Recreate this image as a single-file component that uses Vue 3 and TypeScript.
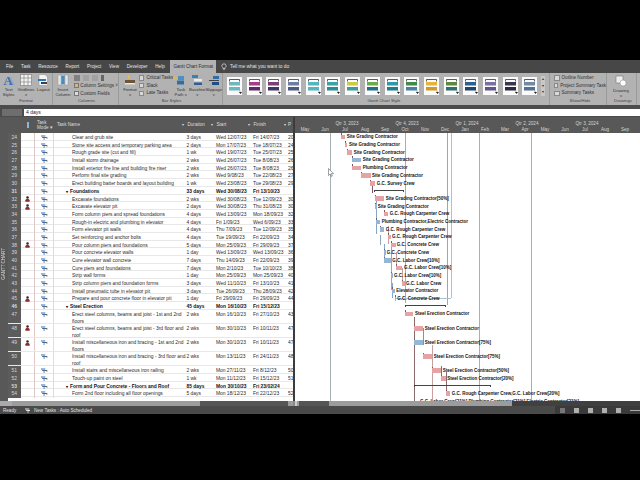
<script setup lang="ts">
interface Row { id: number; res?: boolean; name: string; dur: string; start: string; finish: string; pred?: string; bold?: boolean; tall?: boolean }
interface Bar { id: number; x: number; w: number; c?: string; label?: string; lx?: number; summary?: boolean }

const tabs = ['File', 'Task', 'Resource', 'Report', 'Project', 'View', 'Developer', 'Help']
const styles = [
  ['#6fb7bf', '#6fb7bf'], ['#a83c8c', '#5b2b66'], ['#7a3f78', '#3e3560'], ['#6d7fa8', '#4e5a80'],
  ['#57b3be', '#57b3be'], ['#3aa3a6', '#2b8c92'], ['#c9cc4a', '#3f9a9a'], ['#6aab4c', '#1f6f8c'],
  ['#2c9aa8', '#1f7f8c'], ['#3f8a4a', '#4a7fa8'], ['#e5b53a', '#d09a2c'], ['#5a8a3a', '#2f6f6f'],
  ['#2a5f94', '#1d4570'], ['#7a6fa0', '#5f5785'], ['#3a3550', '#2a2a3a'], ['#6f8ba5', '#557390'],
]

const rows: Row[] = [
  { id: 24, name: 'Clear and grub site', dur: '3 days', start: 'Wed 12/07/23', finish: 'Fri 14/07/23', pred: '20' },
  { id: 25, name: 'Stone site access and temporary parking area', dur: '2 days', start: 'Mon 17/07/23', finish: 'Tue 18/07/23', pred: '24' },
  { id: 26, name: 'Rough grade site (cut and fill)', dur: '1 wk', start: 'Wed 19/07/23', finish: 'Tue 25/07/23', pred: '25' },
  { id: 27, name: 'Install storm drainage', dur: '2 wks', start: 'Wed 26/07/23', finish: 'Tue 8/08/23', pred: '26' },
  { id: 28, name: 'Install exterior fire line and building fire riser', dur: '2 wks', start: 'Wed 26/07/23', finish: 'Tue 8/08/23', pred: '26' },
  { id: 29, name: 'Perform final site grading', dur: '2 wks', start: 'Wed 9/08/23', finish: 'Tue 22/08/23', pred: '27' },
  { id: 30, name: 'Erect building batter boards and layout building', dur: '1 wk', start: 'Wed 23/08/23', finish: 'Tue 29/08/23', pred: '29' },
  { id: 31, name: 'Foundations', dur: '33 days', start: 'Wed 30/08/23', finish: 'Fri 13/10/23', bold: true },
  { id: 32, res: true, name: 'Excavate foundations', dur: '2 wks', start: 'Wed 30/08/23', finish: 'Tue 12/09/23', pred: '30' },
  { id: 33, res: true, name: 'Excavate elevator pit', dur: '2 days', start: 'Wed 30/08/23', finish: 'Thu 31/08/23', pred: '30' },
  { id: 34, name: 'Form column piers and spread foundations', dur: '4 days', start: 'Wed 13/09/23', finish: 'Mon 18/09/23', pred: '32' },
  { id: 35, name: 'Rough-in electric and plumbing in elevator', dur: '4 days', start: 'Fri 1/09/23', finish: 'Wed 6/09/23', pred: '33' },
  { id: 36, name: 'Form elevator pit walls', dur: '4 days', start: 'Thu 7/09/23', finish: 'Tue 12/09/23', pred: '35' },
  { id: 37, name: 'Set reinforcing and anchor bolts', dur: '4 days', start: 'Tue 19/09/23', finish: 'Fri 22/09/23', pred: '34' },
  { id: 38, res: true, name: 'Pour column piers and foundations', dur: '5 days', start: 'Mon 25/09/23', finish: 'Fri 29/09/23', pred: '37' },
  { id: 39, name: 'Pour concrete elevator walls', dur: '1 day', start: 'Wed 13/09/23', finish: 'Wed 13/09/23', pred: '36' },
  { id: 40, name: 'Cure elevator wall concrete', dur: '7 days', start: 'Thu 14/09/23', finish: 'Fri 22/09/23', pred: '39' },
  { id: 41, name: 'Cure piers and foundations', dur: '7 days', start: 'Mon 2/10/23', finish: 'Tue 10/10/23', pred: '38' },
  { id: 42, name: 'Strip wall forms', dur: '1 day', start: 'Mon 25/09/23', finish: 'Mon 25/09/23', pred: '40' },
  { id: 43, name: 'Strip column piers and foundation forms', dur: '3 days', start: 'Wed 11/10/23', finish: 'Fri 13/10/23', pred: '41' },
  { id: 44, name: 'Install pneumatic tube in elevator pit', dur: '3 days', start: 'Tue 26/09/23', finish: 'Thu 28/09/23', pred: '42' },
  { id: 45, res: true, name: 'Prepare and pour concrete floor in elevator pit', dur: '1 day', start: 'Fri 29/09/23', finish: 'Fri 29/09/23', pred: '44' },
  { id: 46, name: 'Steel Erection', dur: '45 days', start: 'Mon 16/10/23', finish: 'Fri 15/12/23', bold: true },
  { id: 47, tall: true, name: 'Erect steel columns, beams and joist - 1st and 2nd floors', dur: '2 wks', start: 'Mon 16/10/23', finish: 'Fri 27/10/23', pred: '43' },
  { id: 48, tall: true, res: true, name: 'Erect steel columns, beams and joist - 3rd floor and roof', dur: '2 wks', start: 'Mon 30/10/23', finish: 'Fri 10/11/23', pred: '47' },
  { id: 49, tall: true, res: true, name: 'Install miscellaneous iron and bracing - 1st and 2nd floors', dur: '2 wks', start: 'Mon 30/10/23', finish: 'Fri 10/11/23', pred: '47' },
  { id: 50, tall: true, name: 'Install miscellaneous iron and bracing - 3rd floor and roof', dur: '2 wks', start: 'Mon 13/11/23', finish: 'Fri 24/11/23', pred: '48' },
  { id: 51, name: 'Install stairs and miscellaneous iron railing', dur: '2 wks', start: 'Mon 27/11/23', finish: 'Fri 8/12/23', pred: '50' },
  { id: 52, name: 'Touch-up paint on steel', dur: '1 wk', start: 'Mon 11/12/23', finish: 'Fri 15/12/23', pred: '51' },
  { id: 53, name: 'Form and Pour Concrete - Floors and Roof', dur: '85 days', start: 'Mon 30/10/23', finish: 'Fri 23/02/24', bold: true },
  { id: 54, name: 'Form 2nd floor including all floor openings', dur: '5 days', start: 'Mon 18/12/23', finish: 'Fri 22/12/23', pred: '52' },
]

const R = '#e6a3a5'
const B = '#95b6d8'
const bars: Bar[] = [
  { id: 24, x: 341, w: 4, c: R, label: 'Site Grading Contractor', lx: 346.7 },
  { id: 25, x: 345, w: 2, c: R, label: 'Site Grading Contractor', lx: 349 },
  { id: 26, x: 347, w: 5, c: R, label: 'Site Grading Contractor', lx: 353.7 },
  { id: 27, x: 352, w: 9, c: B, label: 'Site Grading Contractor', lx: 362.7 },
  { id: 28, x: 352, w: 9, c: R, label: 'Plumbing Contractor', lx: 362.7 },
  { id: 29, x: 361, w: 10, c: R, label: 'Site Grading Contractor', lx: 372 },
  { id: 30, x: 370, w: 5, c: R, label: 'G.C. Survey Crew', lx: 376.7 },
  { id: 31, x: 374, w: 30, summary: true },
  { id: 32, x: 375, w: 9, c: R, label: 'Site Grading Contractor[50%]', lx: 385.7 },
  { id: 33, x: 375, w: 2, c: B, label: 'Site Grading Contractor', lx: 377.7 },
  { id: 34, x: 384, w: 4, c: R, label: 'G.C. Rough Carpenter Crew', lx: 389.7 },
  { id: 35, x: 376, w: 4, c: B, label: 'Plumbing Contractor,Electric Contractor', lx: 381.7 },
  { id: 36, x: 380, w: 4, c: B, label: 'G.C. Rough Carpenter Crew', lx: 385.7 },
  { id: 37, x: 388, w: 3, c: R, label: 'G.C. Rough Carpenter Crew', lx: 392 },
  { id: 38, x: 391, w: 5, c: R, label: 'G.C. Concrete Crew', lx: 396.7 },
  { id: 39, x: 384, w: 2, c: B, label: 'G.C. Concrete Crew', lx: 386.7 },
  { id: 40, x: 384, w: 7, c: B, label: 'G.C. Labor Crew[10%]', lx: 392.3 },
  { id: 41, x: 396, w: 6, c: R, label: 'G.C. Labor Crew[10%]', lx: 404 },
  { id: 42, x: 391, w: 2, c: B, label: 'G.C. Labor Crew[10%]', lx: 394 },
  { id: 43, x: 402, w: 3, c: R, label: 'G.C. Labor Crew', lx: 406 },
  { id: 44, x: 392, w: 3, c: B, label: 'Elevator Contractor', lx: 396.3 },
  { id: 45, x: 395, w: 1, c: B, label: 'G.C. Concrete Crew', lx: 397.3 },
  { id: 46, x: 405, w: 41, summary: true },
  { id: 47, x: 405, w: 8, c: R, label: 'Steel Erection Contractor', lx: 415 },
  { id: 48, x: 414, w: 9, c: R, label: 'Steel Erection Contractor', lx: 424.7 },
  { id: 49, x: 414, w: 9, c: B, label: 'Steel Erection Contractor[75%]', lx: 424.7 },
  { id: 50, x: 423, w: 9, c: R, label: 'Steel Erection Contractor[75%]', lx: 433.7 },
  { id: 51, x: 432, w: 9, c: R, label: 'Steel Erection Contractor[50%]', lx: 442.7 },
  { id: 52, x: 441, w: 5, c: R, label: 'Steel Erection Contractor[20%]', lx: 447.3 },
  { id: 53, x: 414, w: 77, summary: true },
  { id: 54, x: 446, w: 4, c: R, label: 'G.C. Rough Carpenter Crew,G.C. Labor Crew[20%]', lx: 451.7 },
]

const months = ['May', 'Jun', 'Jul', 'Aug', 'Sep', 'Oct', 'Nov', 'Dec', 'Jan', 'Feb', 'Mar', 'Apr', 'May', 'Jun', 'Jul', 'Aug', 'Sep']
const quarters = ['Qtr 3, 2023', 'Qtr 4, 2023', 'Qtr 1, 2024', 'Qtr 2, 2024', 'Qtr 3, 2024']

const GX = 295
const GY = 133
const guides = [
  { x: 329.5, h: 268, c: '#a5b0b6' },
  { x: 405, h: 170, c: '#a5b0b6' },
  { x: 446.700, h: 172, c: '#9aa8b4' },
  { x: 451, h: 165, c: '#a9c4cf' },
  { x: 479, h: 268, c: '#a5b0b6' },
  { x: 531, h: 268, c: '#a5b0b6' },
]
const connectors = [
  { x: 372, y1: 186, y2: 193, c: '#7a5a60' },
  { x: 376, y1: 198, y2: 234, c: '#86a6c4' },
  { x: 380, y1: 235, y2: 245, c: '#86a6c4' },
  { x: 384, y1: 244, y2: 262, c: '#86a6c4' },
  { x: 388, y1: 226, y2: 244, c: '#c99a9a' },
  { x: 391, y1: 244, y2: 290, c: '#98a8b6' },
  { x: 396, y1: 252, y2: 270, c: '#c99a9a' },
  { x: 402, y1: 268, y2: 284, c: '#c99a9a' },
  { x: 392, y1: 283, y2: 298, c: '#86a6c4' },
  { x: 414, y1: 317, y2: 401, c: '#8a6a6a' },
  { x: 423, y1: 328, y2: 345, c: '#9a8a8a' },
  { x: 432, y1: 345, y2: 401, c: '#c9a0a0' },
  { x: 441, y1: 366, y2: 375, c: '#8a6a6a' },
  { x: 446, y1: 372, y2: 392, c: '#8a6a6a' },
]

const rowH = 7.7
const tallH = 14.1
const tops = new Map<number, number>()
let acc = 0
for (const r of rows) {
  tops.set(r.id, acc)
  acc += r.tall ? tallH : rowH
}
const placed = bars.map((b) => ({ ...b, top: (tops.get(b.id) ?? 0) + 1.8 }))
</script>

<template>
  <div class="screen">
    <div class="black-top"></div>

    <nav class="tabs">
      <span v-for="t in tabs" :key="t" class="tab">{{ t }}</span>
      <span class="tab active">Gantt Chart Format</span>
      <svg class="bulb" viewBox="0 0 8 10" width="6" height="8"><path d="M4 .8a2.7 2.7 0 0 0-1.5 5V7h3V5.800A2.700 2.700 0 0 0 4 .8zM3 8.500h2" fill="none" stroke="#e8e8e8" stroke-width=".9" /></svg>
      <span class="tell">Tell me what you want to do</span>
    </nav>

    <section class="ribbon">
      <div class="group g-format">
        <div class="cmds">
          <div class="cmd w17">
            <svg viewBox="0 0 12 12" width="12" height="12"><text x="0.500" y="10.500" class="aa">A</text></svg>
            <span>Text<br />Styles</span>
          </div>
          <div class="cmd w17">
            <svg viewBox="0 0 12 12" width="12" height="12"><rect x=".5" y=".5" width="11" height="11" fill="#f2f2f2" stroke="#777" stroke-width=".6" /><path d="M4 .5v11M8 .5v11M.5 4h11M.5 8h11" stroke="#777" stroke-width=".6" /></svg>
            <span>Gridlines<br />&#709;</span>
          </div>
          <div class="cmd w17">
            <svg viewBox="0 0 12 12" width="12" height="12"><path d="M2 .5h6l2.500 2.500v8.500H2z" fill="#f5f5f5" stroke="#888" stroke-width=".5" /><rect x="1" y="5" width="8" height="2" fill="#2f78b8" /><rect x="4" y="8" width="6" height="2" fill="#3f3f3f" /></svg>
            <span>Layout</span>
          </div>
        </div>
        <div class="glabel">Format</div>
      </div>

      <div class="group g-columns">
        <div class="cmds">
          <div class="cmd w17">
            <svg viewBox="0 0 12 12" width="12" height="12"><rect x="1" y="1" width="3" height="10" fill="#e8e8e8" stroke="#888" stroke-width=".4" /><rect x="8" y="1" width="3" height="10" fill="#e8e8e8" stroke="#888" stroke-width=".4" /><rect x="4.500" y="2" width="3" height="8" fill="#3f8fc9" /></svg>
            <span>Insert<br />Column</span>
          </div>
          <div class="col-tools">
            <div class="mini-row">
              <i class="sq dark"></i><i class="sq"></i><i class="sq"></i><i class="sq pin"></i>
            </div>
            <div class="opt"><i class="swatch warm"></i>Column Settings &#709;</div>
            <div class="opt"><i class="swatch"></i>Custom Fields</div>
          </div>
        </div>
        <div class="glabel">Columns</div>
      </div>

      <div class="group g-bars">
        <div class="cmds">
          <div class="cmd w18">
            <svg viewBox="0 0 12 12" width="12" height="12"><path d="M4 1l2 2-2 2z" fill="#f0c040" /><rect x="1" y="6" width="10" height="3" fill="#6b5638" /><rect x="1" y="9" width="10" height="1.500" fill="#e6e6e6" /></svg>
            <span>Format<br />&#709;</span>
          </div>
          <div class="checks">
            <label class="chk"><i></i>Critical Tasks</label>
            <label class="chk"><i></i>Slack</label>
            <label class="chk"><i></i>Late Tasks</label>
          </div>
          <div class="arrow-flag"></div>
          <div class="cmd w165">
            <svg viewBox="0 0 12 12" width="12" height="12"><rect x="3" y="2" width="6" height="4" fill="#4d8fc2" /><rect x="2" y="6.500" width="7" height="4" fill="#2f6ea6" /></svg>
            <span>Task<br />Path &#709;</span>
          </div>
          <div class="cmd w165">
            <svg viewBox="0 0 12 12" width="12" height="12"><rect x="1" y="1" width="6" height="3" fill="#3b7fb8" /><rect x="3" y="5" width="8" height="2.500" fill="#e8e8e8" /><rect x="3" y="8.500" width="8" height="2.500" fill="#2f5f8f" /></svg>
            <span>Baseline<br />&#709;</span>
          </div>
          <div class="cmd w165">
            <svg viewBox="0 0 12 12" width="12" height="12"><rect x="5" y="2" width="6" height="3" fill="#2f6ea6" /><rect x="1" y="6" width="10" height="1" fill="#444" /><rect x="4" y="8" width="7" height="3" fill="#1f4f80" /></svg>
            <span>Slippage<br />&#709;</span>
          </div>
        </div>
        <div class="glabel">Bar Styles</div>
      </div>

      <div class="group g-gallery">
        <div class="gallery">
          <div v-for="(s, i) in styles" :key="i" class="thumb">
            <svg viewBox="0 0 15 18" width="15" height="18">
              <path d="M2.500 4.500V2.500h10v2" fill="none" stroke="#333" stroke-width=".8" />
              <rect x="2" y="5" width="11" height="3.500" :fill="s[0]" />
              <rect x="2" y="10" width="11" height="3.500" :fill="s[1]" />
              <path d="M13 13.500v2" stroke="#777" stroke-width=".6" />
              <path d="M12 15l1.500 2 1.500-2z" fill="#222" />
            </svg>
          </div>
          <div class="spin"><i>&#9652;</i><i>&#9662;</i><i>&#9662;</i></div>
        </div>
        <div class="glabel gal-label">Gantt Chart Style</div>
      </div>

      <div class="group g-show">
        <div class="checks show">
          <label class="chk"><i></i>Outline Number</label>
          <label class="chk"><i></i>Project Summary Task</label>
          <label class="chk"><i></i>Summary Tasks</label>
        </div>
        <div class="glabel">Show/Hide</div>
      </div>

      <div class="group g-draw">
        <div class="cmd w22">
          <svg viewBox="0 0 12 12" width="12" height="12"><rect x="1" y="1" width="7" height="7" fill="#eee" stroke="#777" stroke-width=".6" /><circle cx="8" cy="8" r="3" fill="#fff" stroke="#888" stroke-width=".5" /></svg>
          <span>Drawing<br />&#709;</span>
        </div>
        <div class="glabel">Drawings</div>
      </div>
    </section>

    <div class="entry">
      <div class="entry-box"></div>
      <div class="entry-field">4 days</div>
    </div>

    <div class="main">
      <div class="table-side">
        <div class="thead">
          <span class="c-id"></span>
          <span class="c-ind"><i class="info"></i></span>
          <span class="c-mode">Task<br />Mode &#9662;</span>
          <span class="c-name">Task Name<b>&#9662;</b></span>
          <span class="c-dur">Duration<b>&#9662;</b></span>
          <span class="c-start">Start<b>&#9662;</b></span>
          <span class="c-finish">Finish<b>&#9662;</b></span>
          <span class="c-pred">P</span>
        </div>
        <div class="tbody">
          <div class="rail"><span>GANTT CHART</span></div>
          <div class="rows">
            <div v-for="r in rows" :key="r.id" class="row" :class="{ tall: r.tall, bold: r.bold }">
              <span class="c-id">{{ r.id }}</span>
              <span class="c-ind">
                <svg v-if="r.res" viewBox="0 0 6 7" width="5" height="6"><circle cx="3" cy="1.600" r="1.500" fill="#3a1f1f" /><path d="M.5 6.800V5a2.500 1.800 0 0 1 5 0v1.800z" fill="#8f2a2a" /></svg>
              </span>
              <span class="c-mode">
                <svg viewBox="0 0 9 6" width="7" height="5"><path d="M0 1h5.500M1.500 3h5M3 5h2" stroke="#3b6ea8" stroke-width="1.300" /><path d="M6 3l2-1v3z" fill="#555" /></svg>
              </span>
              <span class="c-name" :class="{ summary: r.bold }">
                <i v-if="r.bold" class="tri">&#9662;</i>{{ r.name }}
              </span>
              <span class="c-dur">{{ r.dur }}</span>
              <span class="c-start">{{ r.start }}</span>
              <span class="c-finish">{{ r.finish }}</span>
              <span class="c-pred">{{ r.pred }}</span>
            </div>
          </div>
        </div>
      </div>

      <div class="splitter"></div>

      <div class="gantt">
        <div class="timescale">
          <div class="qtrs"><span v-for="q in quarters" :key="q">{{ q }}</span></div>
          <div class="months"><span v-for="(m, i) in months" :key="i">{{ m }}</span></div>
        </div>
        <div class="canvas">
          <i v-for="g in guides" :key="g.x" class="guide" :style="{ left: g.x - GX + 'px', height: g.h + 'px', background: g.c }"></i>
          <i v-for="k in connectors" :key="k.x + '-' + k.y1" class="guide" :style="{ left: k.x - GX + 'px', top: k.y1 - GY + 'px', height: k.y2 - k.y1 + 'px', background: k.c }"></i>
          <i class="hline"></i>
          <svg class="cursor" viewBox="0 0 6 9" width="6" height="9"><path d="M.5.500v7l1.700-1.500 1.200 2.500 1-.5L3.300 5.600h2.200z" fill="#fff" stroke="#444" stroke-width=".5" /></svg>
          <template v-for="b in placed" :key="b.id">
            <div v-if="b.summary" class="summary-bar" :style="{ left: b.x - GX + 'px', top: b.top + 'px', width: b.w + 'px' }"></div>
            <template v-else>
              <div class="link" :style="{ left: b.x - GX + 'px', top: b.top - 1.5 + 'px' }"></div>
              <div class="bar" :style="{ left: b.x - GX + 'px', top: b.top + 'px', width: b.w + 'px', background: b.c }"></div>
              <div class="bar-label" :style="{ left: (b.lx ?? 0) - GX + 'px', top: b.top - 1.5 + 'px' }">{{ b.label }}</div>
            </template>
          </template>
          <div class="bar-label cut">G.C. Labor Crew[21%],Plumbing Contractor[21%],Electric Contractor[21%]</div>
        </div>
      </div>
    </div>

    <div class="scrolls">
      <div class="sb-left"><i class="sb-end"></i><div class="sb-track"><i class="sb-thumb"></i></div></div>
      <div class="sb-right"><i class="sb-thumb2"></i><div class="sb-track2"><i class="sb-thumb3"></i></div><div class="sb-rest"></div></div>
    </div>

    <footer class="status">
      <span class="ready">Ready</span>
      <svg viewBox="0 0 9 6" width="7" height="5"><path d="M0 1h5.500M1.500 3h5M3 5h2" stroke="#e8e8e8" stroke-width="1.300" /></svg>
      <span class="newt">New Tasks : Auto Scheduled</span>
      <div class="views">
        <i class="v on"></i><i class="v"></i><i class="v"></i><i class="v"></i><i class="v"></i>
        <span class="zoomline"></span>
      </div>
    </footer>

    <div class="black-bottom"></div>
  </div>
</template>

<style>
html, body { margin: 0; background: #000; }
</style>

<style scoped>
.screen { width: 640px; height: 480px; display: flex; flex-direction: column; overflow: hidden; background: #000; font-family: "Liberation Sans", Arial, sans-serif; font-size: 5px; color: #222; }
.black-top { height: 60px; flex: none; }
.black-bottom { flex: 1; }

.tabs { height: 13px; flex: none; background: #474747; color: #e4e4e4; display: flex; align-items: center; padding-left: 4px; }
.tab { padding: 0 2px; font-size: 4.600px; line-height: 13px; margin-right: 3.700px; white-space: nowrap; }
.tab.active { padding: 0 3px; background: #b3b3b3; color: #2d2d2d; margin-right: 5px; }
.tell { margin-left: 3px; font-size: 4.800px; }

.ribbon { height: 32px; flex: none; background: #b2b2b2; display: flex; color: #333; }
.group { display: flex; flex-direction: column; border-right: 1px solid #9a9a9a; box-sizing: border-box; }
.cmds { display: flex; flex: 1; padding-top: 1px; }
.glabel { height: 7px; text-align: center; font-size: 4.300px; line-height: 6px; color: #444; }
.gal-label { padding-right: 8px; }
.cmd { display: flex; flex-direction: column; align-items: center; font-size: 4.300px; line-height: 5px; text-align: center; }
.cmd span { margin-top: 1px; white-space: nowrap; }
.w17 { width: 17.500px; }
.w18 { width: 18px; }
.w165 { width: 16.500px; }
.w22 { width: 22px; padding-top: 2px; flex: 1; }
.aa { font-size: 13px; font-family: "Liberation Serif", serif; fill: #3f6fb0; font-weight: bold; filter: drop-shadow(2px 0 0 #8fa8cc); }

.g-format { width: 53px; }
.g-columns { width: 66px; padding-left: 2px; }
.g-bars { width: 104px; padding-left: 2px; }
.g-gallery { width: 327px; padding-left: 4px; }
.g-show { width: 57px; padding-left: 4px; }
.g-draw { width: 30px; padding-left: 3px; }

.col-tools { display: flex; flex-direction: column; gap: 1px; font-size: 4.600px; margin-left: 3px; }
.mini-row { display: flex; gap: 3px; height: 7px; align-items: center; }
.sq { width: 6px; height: 6px; background: #a2a2a2; display: block; }
.sq.dark { background: #808080; }
.sq.pin { width: 3px; background: #666; }
.opt { display: flex; align-items: center; gap: 1.500px; line-height: 7px; white-space: nowrap; }
.swatch { width: 5px; height: 5px; border: 0.500px solid #777; background: #ddd; display: block; box-sizing: border-box; }
.swatch.warm { background: #e0b070; }

.checks { display: flex; flex-direction: column; width: 41px; font-size: 4.600px; line-height: 7.700px; }
.checks.show { width: auto; padding-top: 1px; flex: 1; }
.chk { display: flex; align-items: center; gap: 2px; white-space: nowrap; }
.chk i { width: 3.500px; height: 3.500px; background: #d8d8d8; border: 0.500px solid #888; display: block; }
.arrow-flag { width: 0; height: 0; margin: 2px -7px 0 -7px; border-left: 7px solid #d9b95c; border-top: 2px solid transparent; border-bottom: 2px solid transparent; }

.gallery { display: flex; flex: 1; gap: 4.700px; padding-top: 4px; position: relative; }
.thumb { width: 15px; height: 18px; background: #fbfbfb; }
.thumb svg { display: block; }
.spin { position: absolute; left: 314px; top: 3px; width: 4px; display: flex; flex-direction: column; font-size: 4px; line-height: 6.500px; text-align: center; background: #c8c8c8; }
.spin i { font-style: normal; }

.entry { height: 12px; flex: none; background: #4c4c4c; display: flex; align-items: flex-end; padding-bottom: 1px; box-sizing: border-box; gap: 2px; padding-left: 2px; }
.entry-box { width: 20px; height: 7px; background: #6e6e6e; }
.entry-field { flex: 1; height: 7px; background: #fff; font-size: 5px; line-height: 7px; padding-left: 2px; }

.main { flex: none; height: 284px; display: flex; background: #fff; overflow: hidden; }
.table-side { width: 293px; flex: none; display: flex; flex-direction: column; overflow: hidden; }
.thead, .row { display: grid; grid-template-columns: 21px 14px 19px 131.500px 29px 37px 36.500px 5px; align-items: center; }
.thead { height: 16px; flex: none; background: #585858; color: #dedede; font-size: 4.600px; line-height: 5.500px; }
.thead b { float: right; font-weight: normal; font-size: 4px; margin-right: 2px; }
.thead .c-name { padding-left: 3px; box-sizing: border-box; }
.thead .c-mode { padding-left: 2px; white-space: nowrap; }
.thead .c-dur, .thead .c-start, .thead .c-finish { padding-left: 2px; }
.info { display: block; width: 2px; height: 6px; background: #8fb4d8; margin: 0 auto; }

.tbody { flex: 1; display: flex; overflow: hidden; }
.rail { width: 8px; flex: none; background: #585858; position: relative; margin-right: -8px; z-index: 1; }
.rail span { position: absolute; left: 1px; top: 115px; writing-mode: vertical-rl; transform: rotate(180deg); font-size: 4.500px; color: #d8d8d8; white-space: nowrap; }
.rows { flex: 1; height: 268px; overflow: hidden; }
.row { height: 7.700px; font-size: 4.900px; line-height: 9px; border-bottom: 0.300px solid #e8e8e8; box-sizing: border-box; white-space: nowrap; color: #2a2a2a; align-items: start; }
.row.tall { height: 14.100px; }
.row.bold { font-weight: bold; color: #111; }
.row .c-id { background: #5c5c5c; color: #d8d8d8; text-align: right; padding-right: 4px; height: 100%; box-sizing: border-box; }
.row .c-ind { display: flex; justify-content: center; padding-top: 1.500px; border-right: 0.300px solid #dfc8c8; height: 100%; box-sizing: border-box; }
.row .c-mode { display: flex; justify-content: center; padding-top: 2px; border-right: 0.300px solid #ddd; height: 100%; box-sizing: border-box; }
.row .c-name { padding-left: 18px; box-sizing: border-box; overflow: hidden; }
.row.tall .c-name { white-space: normal; line-height: 7px; padding-top: 1px; }
.row .c-name.summary { padding-left: 12px; }
.tri { font-style: normal; font-size: 4px; margin-right: 2px; }
.c-dur { padding-left: 1px; }
.c-start, .c-finish { padding-left: 1.500px; overflow: hidden; }
.c-pred { overflow: hidden; }

.splitter { width: 2px; flex: none; background: #3c3c3c; }

.gantt { flex: 1; display: flex; flex-direction: column; min-width: 0; }
.timescale { height: 16px; flex: none; background: #585858; color: #d4d4d4; font-size: 4.600px; }
.qtrs { display: flex; height: 9px; align-items: flex-end; padding-left: 22px; }
.qtrs span { width: 60px; text-align: center; flex: none; white-space: nowrap; }
.months { display: flex; height: 7px; align-items: center; }
.months span { width: 20px; flex: none; text-align: center; }
.canvas { flex: 1; position: relative; overflow: hidden; background: #fff; }
.guide { position: absolute; top: 0; width: 1px; display: block; }
.hline { position: absolute; left: 101px; top: 165px; width: 55px; height: 1px; background: #a9c4cf; }
.cursor { position: absolute; left: 33px; top: 35px; }
.bar { position: absolute; height: 4.500px; }
.link { position: absolute; width: 1px; height: 3.500px; background: #7a5a60; }
.bar-label { position: absolute; font-size: 4.500px; font-weight: bold; color: #111; line-height: 7px; white-space: nowrap; }
.bar-label.cut { left: 125px; top: 265px; }
.summary-bar { position: absolute; height: 2px; border-top: 1px solid #444; border-left: 1px solid #444; border-right: 1px solid #444; box-sizing: border-box; margin-top: 1px; }

.scrolls { height: 5px; flex: none; display: flex; background: #8a8a8a; }
.sb-left { width: 293px; display: flex; flex: none; }
.sb-end { width: 12px; background: #aaa; display: block; }
.sb-track { flex: 1; background: #9c9c9c; display: flex; justify-content: flex-end; padding-right: 5px; }
.sb-thumb { width: 88px; background: #555; display: block; }
.sb-right { flex: 1; display: flex; margin-left: 2px; }
.sb-thumb2 { width: 2px; background: #ccc; display: block; }
.sb-track2 { width: 215px; background: #9c9c9c; padding-left: 2px; display: flex; box-sizing: border-box; }
.sb-thumb3 { width: 30px; background: #555; display: block; }
.sb-rest { flex: 1; background: #404040; }

.status { height: 8px; flex: none; background: #4a4a4a; color: #e0e0e0; display: flex; align-items: center; font-size: 4.600px; gap: 2px; position: relative; }
.ready { margin-left: 3px; width: 20px; }
.views { margin-left: auto; height: 8px; display: flex; align-items: center; gap: 9px; width: 85px; box-sizing: border-box; padding-left: 5px; background: #3a3a3a; }
.v { width: 5px; height: 5px; background: #b0b0b0; display: block; }
.v.on { background: #777; }
.zoomline { width: 10px; height: 1px; background: #aaa; }
</style>
